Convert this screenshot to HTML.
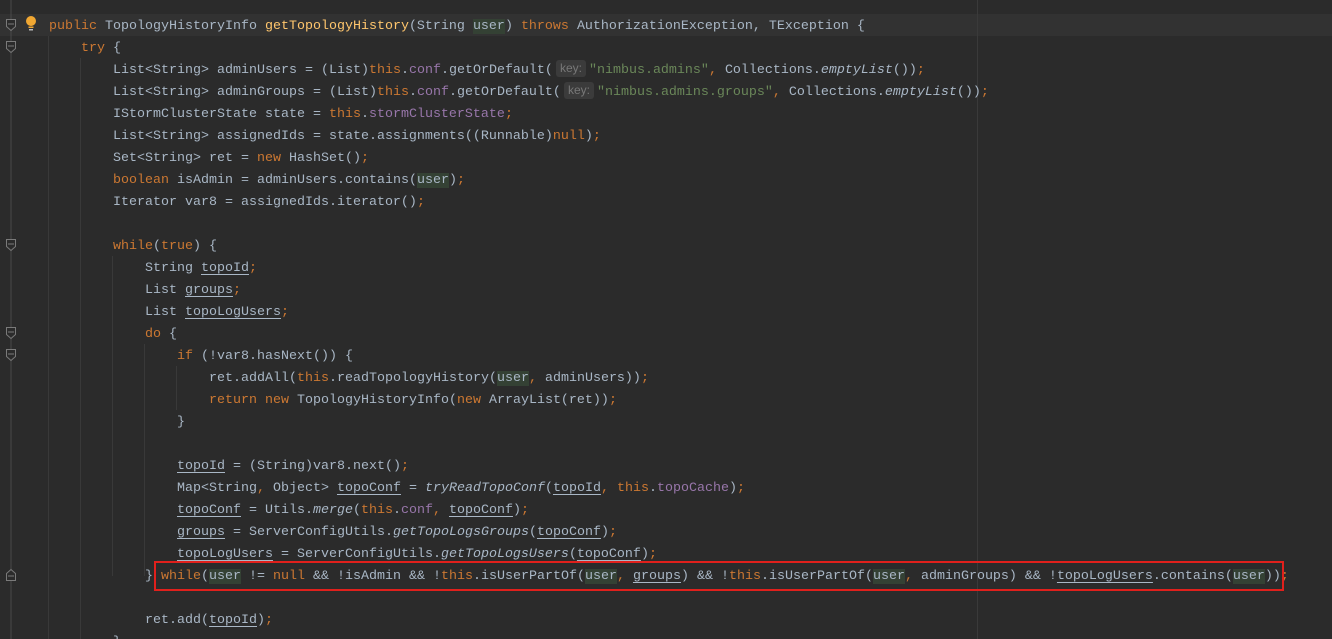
<!DOCTYPE html>
<html><head><meta charset="utf-8"><style>
html,body{margin:0;padding:0;width:1332px;height:639px;overflow:hidden;}
body{background:#2b2b2b;position:relative;font-family:"Liberation Mono",monospace;font-size:13.33px;color:#a9b7c6;}
.l{position:absolute;left:0;height:22px;line-height:22px;white-space:pre;}
.k{color:#cc7832}.m{color:#ffc66d}.f{color:#9876aa}.s{color:#6a8759}.i{font-style:italic}
.u{text-decoration:underline;text-underline-offset:3px}
.h{background:#344134}
.hint{display:inline-block;background:#3b3b3b;color:#787878;font-family:"Liberation Sans",sans-serif;font-size:12px;line-height:17px;height:17px;padding:0 4px;border-radius:3px;margin:0 3px 0 3px;vertical-align:1px}
.g{position:absolute;width:1px;background:#393939}
#c{position:absolute;left:0;top:2px;width:1332px;height:637px;}
</style></head><body>
<div style="position:absolute;left:0;top:14px;width:1332px;height:22px;background:#323232"></div>
<div style="position:absolute;left:977px;top:0;width:1px;height:639px;background:#3a3a3a"></div>
<div class="g" style="left:48px;top:36px;height:603px"></div>
<div class="g" style="left:80px;top:58px;height:581px"></div>
<div class="g" style="left:112px;top:256px;height:320px"></div>
<div class="g" style="left:144px;top:344px;height:232px"></div>
<div class="g" style="left:176px;top:366px;height:44px"></div>
<svg style="position:absolute;left:0;top:0" width="20" height="639">
<line x1="11" y1="0" x2="11" y2="639" stroke="#4a4a4a"/>
<g fill="#2b2b2b" stroke="#7a7a7a" stroke-width="1">
<path d="M6.5 19.5h9v7l-4.5 4-4.5-4z"/><line x1="8" y1="24" x2="14" y2="24"/>
<path d="M6.5 41.5h9v7l-4.5 4-4.5-4z"/><line x1="8" y1="46" x2="14" y2="46"/>
<path d="M6.5 239.5h9v7l-4.5 4-4.5-4z"/><line x1="8" y1="244" x2="14" y2="244"/>
<path d="M6.5 327.5h9v7l-4.5 4-4.5-4z"/><line x1="8" y1="332" x2="14" y2="332"/>
<path d="M6.5 349.5h9v7l-4.5 4-4.5-4z"/><line x1="8" y1="354" x2="14" y2="354"/>
<path d="M6.5 580.5h9v-7l-4.5-4-4.5 4z"/><line x1="8" y1="576" x2="14" y2="576"/>
</g></svg>
<svg style="position:absolute;left:24px;top:15px" width="14" height="18"><circle cx="7" cy="6" r="5" fill="#f0a732"/><rect x="4.5" y="11.5" width="5" height="1.5" fill="#f0a732"/><rect x="5" y="14" width="4" height="1.5" fill="#bbb"/></svg>
<div id="c">
<div class="l" style="top:14px;left:49px"><span class="k">public </span>TopologyHistoryInfo <span class="m">getTopologyHistory</span>(String <span class="h">user</span>) <span class="k">throws </span>AuthorizationException, TException {</div>
<div class="l" style="top:36px;left:81px"><span class="k">try </span>{</div>
<div class="l" style="top:58px;left:113px">List&lt;String&gt; adminUsers = (List)<span class="k">this</span>.<span class="f">conf</span>.getOrDefault(<span class="hint">key:</span><span class="s">"nimbus.admins"</span><span class="k">, </span>Collections.<span class="i">emptyList</span>())<span class="k">;</span></div>
<div class="l" style="top:80px;left:113px">List&lt;String&gt; adminGroups = (List)<span class="k">this</span>.<span class="f">conf</span>.getOrDefault(<span class="hint">key:</span><span class="s">"nimbus.admins.groups"</span><span class="k">, </span>Collections.<span class="i">emptyList</span>())<span class="k">;</span></div>
<div class="l" style="top:102px;left:113px">IStormClusterState state = <span class="k">this</span>.<span class="f">stormClusterState</span><span class="k">;</span></div>
<div class="l" style="top:124px;left:113px">List&lt;String&gt; assignedIds = state.assignments((Runnable)<span class="k">null</span>)<span class="k">;</span></div>
<div class="l" style="top:146px;left:113px">Set&lt;String&gt; ret = <span class="k">new </span>HashSet()<span class="k">;</span></div>
<div class="l" style="top:168px;left:113px"><span class="k">boolean </span>isAdmin = adminUsers.contains(<span class="h">user</span>)<span class="k">;</span></div>
<div class="l" style="top:190px;left:113px">Iterator var8 = assignedIds.iterator()<span class="k">;</span></div>
<div class="l" style="top:234px;left:113px"><span class="k">while</span>(<span class="k">true</span>) {</div>
<div class="l" style="top:256px;left:145px">String <span class="u">topoId</span><span class="k">;</span></div>
<div class="l" style="top:278px;left:145px">List <span class="u">groups</span><span class="k">;</span></div>
<div class="l" style="top:300px;left:145px">List <span class="u">topoLogUsers</span><span class="k">;</span></div>
<div class="l" style="top:322px;left:145px"><span class="k">do </span>{</div>
<div class="l" style="top:344px;left:177px"><span class="k">if </span>(!var8.hasNext()) {</div>
<div class="l" style="top:366px;left:209px">ret.addAll(<span class="k">this</span>.readTopologyHistory(<span class="h">user</span><span class="k">, </span>adminUsers))<span class="k">;</span></div>
<div class="l" style="top:388px;left:209px"><span class="k">return new </span>TopologyHistoryInfo(<span class="k">new </span>ArrayList(ret))<span class="k">;</span></div>
<div class="l" style="top:410px;left:177px">}</div>
<div class="l" style="top:454px;left:177px"><span class="u">topoId</span> = (String)var8.next()<span class="k">;</span></div>
<div class="l" style="top:476px;left:177px">Map&lt;String<span class="k">, </span>Object&gt; <span class="u">topoConf</span> = <span class="i">tryReadTopoConf</span>(<span class="u">topoId</span><span class="k">, this</span>.<span class="f">topoCache</span>)<span class="k">;</span></div>
<div class="l" style="top:498px;left:177px"><span class="u">topoConf</span> = Utils.<span class="i">merge</span>(<span class="k">this</span>.<span class="f">conf</span><span class="k">, </span><span class="u">topoConf</span>)<span class="k">;</span></div>
<div class="l" style="top:520px;left:177px"><span class="u">groups</span> = ServerConfigUtils.<span class="i">getTopoLogsGroups</span>(<span class="u">topoConf</span>)<span class="k">;</span></div>
<div class="l" style="top:542px;left:177px"><span class="u">topoLogUsers</span> = ServerConfigUtils.<span class="i">getTopoLogsUsers</span>(<span class="u">topoConf</span>)<span class="k">;</span></div>
<div class="l" style="top:564px;left:145px">} <span class="k">while</span>(<span class="h">user</span> != <span class="k">null </span>&amp;&amp; !isAdmin &amp;&amp; !<span class="k">this</span>.isUserPartOf(<span class="h">user</span><span class="k">, </span><span class="u">groups</span>) &amp;&amp; !<span class="k">this</span>.isUserPartOf(<span class="h">user</span><span class="k">, </span>adminGroups) &amp;&amp; !<span class="u">topoLogUsers</span>.contains(<span class="h">user</span>))<span class="k">;</span></div>
<div class="l" style="top:608px;left:145px">ret.add(<span class="u">topoId</span>)<span class="k">;</span></div>
<div class="l" style="top:630px;left:113px">}</div>
</div>
<div style="position:absolute;left:154px;top:561px;width:1126px;height:26px;border:2px solid #e0201c"></div>
</body></html>
